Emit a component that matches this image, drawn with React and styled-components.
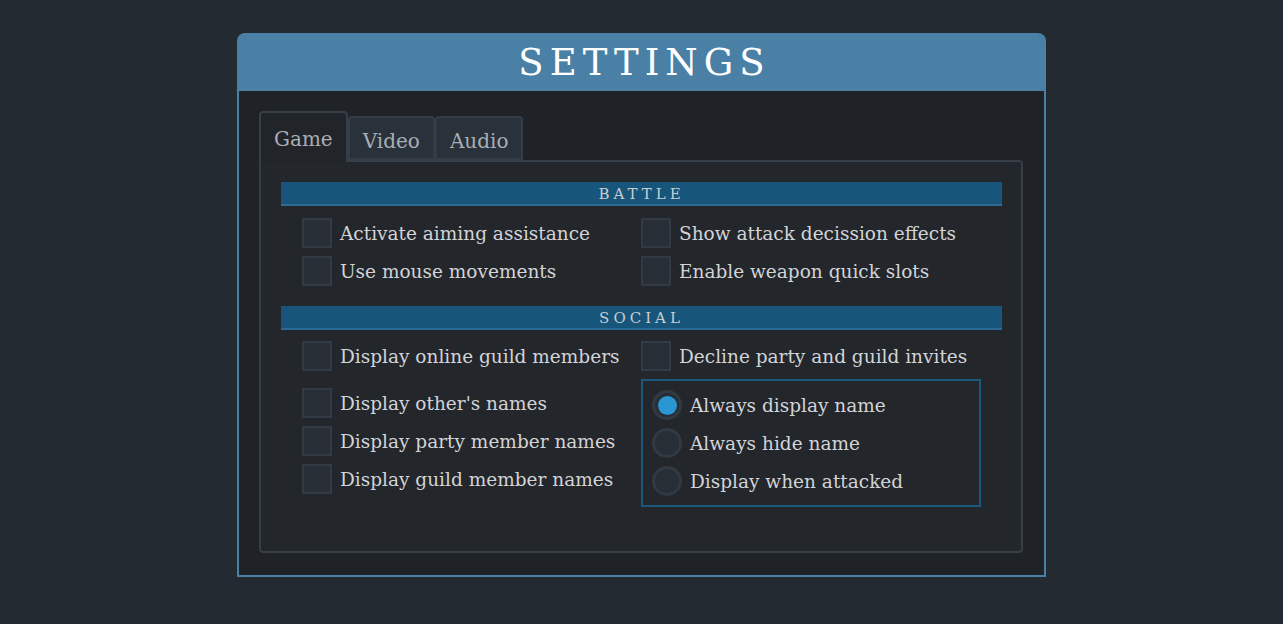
import React, { useState } from 'react';
import styled, { createGlobalStyle } from 'styled-components';

const GlobalStyle = createGlobalStyle`
  html, body {
    margin: 0;
    padding: 0;
    background: #242a31;
  }
  body {
    font-family: 'DejaVu Serif', 'Liberation Serif', serif;
  }
`;

const Page = styled.div`
  padding-top: 33px;
  display: flex;
  justify-content: center;
`;

const Dialog = styled.div`
  width: 809px;
`;

const Header = styled.div`
  height: 58px;
  background: #4a80a5;
  border-radius: 8px 8px 0 0;
  display: flex;
  align-items: center;
  justify-content: center;
`;

const Title = styled.h1`
  margin: 0;
  color: #ffffff;
  font-size: 37px;
  font-weight: 400;
  letter-spacing: 6px;
  padding-left: 6px;
`;

const Body = styled.div`
  background: #1f2226;
  border: 2px solid #4a80a5;
  border-top: none;
  padding: 20px 21px 22px 20px;
`;

const TabBar = styled.div`
  display: flex;
  align-items: flex-end;
  margin-bottom: -2px;
  position: relative;
  z-index: 1;
`;

const Tab = styled.button`
  font-family: inherit;
  font-size: 20px;
  color: #a9aeb4;
  cursor: pointer;
  padding: 0 13px;
  box-sizing: border-box;
  border: 2px solid ${p => (p.active ? '#363e47' : '#343d47')};
  border-bottom: ${p => (p.active ? 'none' : '2px solid #343d47')};
  border-radius: 4px 4px 0 0;
  background: ${p => (p.active ? '#212428' : '#29313a')};
  height: ${p => (p.active ? '51px' : '44px')};
  padding-top: ${p => (p.active ? '2px' : '6px')};
  margin-bottom: ${p => (p.active ? '0' : '2px')};
`;

const Panel = styled.div`
  background: #23262b;
  border: 2px solid #363e47;
  border-radius: 0 4px 4px 4px;
  padding: 20px 19px 44px 20px;
`;

const SectionBar = styled.div`
  height: 20px;
  padding-top: 2px;
  background: #17557a;
  border-bottom: 2px solid #2b6a94;
  color: #c8cdd2;
  font-size: 15px;
  letter-spacing: 4px;
  display: flex;
  align-items: center;
  justify-content: center;
`;

const Grid = styled.div`
  display: grid;
  grid-template-columns: 339px 340px;
  row-gap: 8px;
  padding-left: 21px;
  margin-top: ${p => p.top}px;
  margin-bottom: ${p => p.bottom || 0}px;
`;

const Column = styled.div`
  display: flex;
  flex-direction: column;
  gap: 8px;
  padding-top: ${p => p.padTop || 0}px;
`;

const Option = styled.label`
  display: flex;
  align-items: center;
  gap: 8px;
  height: 30px;
  color: #d2d4d7;
  font-size: 18.5px;
  white-space: nowrap;
  cursor: pointer;
`;

const Box = styled.span`
  width: 30px;
  height: 30px;
  box-sizing: border-box;
  flex-shrink: 0;
  background: #272e36;
  border: 2px solid #323b45;
  display: flex;
  align-items: center;
  justify-content: center;
  color: #2b93d0;
  font-size: 18px;
`;

const RadioBox = styled.div`
  border: 2px solid #1c587e;
  padding: 9px;
  display: flex;
  flex-direction: column;
  gap: 8px;
`;

const Radio = styled.span`
  width: 30px;
  height: 30px;
  box-sizing: border-box;
  flex-shrink: 0;
  border-radius: 50%;
  background: #272e36;
  border: 3px solid #313a44;
  display: flex;
  align-items: center;
  justify-content: center;

  &::after {
    content: '';
    width: 19px;
    height: 19px;
    border-radius: 50%;
    background: ${p => (p.checked ? '#2a96d2' : 'transparent')};
  }
`;

const Check = ({ label, checked, onToggle }) => (
  <Option onClick={onToggle}>
    <Box>{checked ? '✓' : ''}</Box>
    {label}
  </Option>
);

const radioOptions = ['Always display name', 'Always hide name', 'Display when attacked'];

export default function App() {
  const [tab, setTab] = useState('Game');
  const [checks, setChecks] = useState({});
  const [nameMode, setNameMode] = useState(0);

  const toggle = key => setChecks(c => ({ ...c, [key]: !c[key] }));
  const item = label => (
    <Check key={label} label={label} checked={!!checks[label]} onToggle={() => toggle(label)} />
  );

  return (
    <>
      <GlobalStyle />
      <Page>
        <Dialog>
          <Header>
            <Title>SETTINGS</Title>
          </Header>
          <Body>
            <TabBar>
              {['Game', 'Video', 'Audio'].map(t => (
                <Tab key={t} active={tab === t} onClick={() => setTab(t)}>
                  {t}
                </Tab>
              ))}
            </TabBar>
            <Panel>
              <SectionBar>BATTLE</SectionBar>
              <Grid top={12} bottom={20}>
                {item('Activate aiming assistance')}
                {item('Show attack decission effects')}
                {item('Use mouse movements')}
                {item('Enable weapon quick slots')}
              </Grid>
              <SectionBar>SOCIAL</SectionBar>
              <Grid top={11}>
                {item('Display online guild members')}
                {item('Decline party and guild invites')}
                <Column padTop={9}>
                  {item("Display other's names")}
                  {item('Display party member names')}
                  {item('Display guild member names')}
                </Column>
                <RadioBox>
                  {radioOptions.map((r, i) => (
                    <Option key={r} onClick={() => setNameMode(i)}>
                      <Radio checked={nameMode === i} />
                      {r}
                    </Option>
                  ))}
                </RadioBox>
              </Grid>
            </Panel>
          </Body>
        </Dialog>
      </Page>
    </>
  );
}
